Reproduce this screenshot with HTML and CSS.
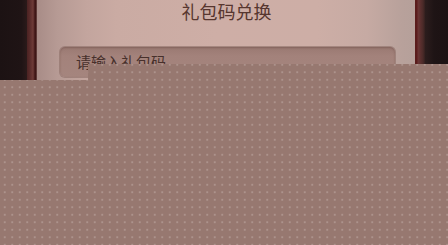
FILE: index.html
```html
<!DOCTYPE html>
<html lang="zh">
<head>
<meta charset="utf-8">
<link rel="stylesheet" href="styles.css">
</head>
<body>
<div class="scene">
  <div class="gutter gutter-left"></div>
  <div class="frame">
    <div class="dialog">
      <h2 class="title">礼包码兑换</h2>
      <div class="input">请输入礼包码</div>
    </div>
  </div>
  <div class="gutter gutter-right"></div>
  <div class="veil"></div>
</div>
</body>
</html>
```
FILE: styles.css
```css
html, body {
  margin: 0;
  padding: 0;
  background: #1d1314;
}
.scene {
  position: relative;
  width: 448px;
  height: 245px;
  overflow: hidden;
  display: flex;
  font-family: "Noto Sans CJK SC", "Noto Sans", sans-serif;
}
.gutter-left {
  width: 27px;
  background: linear-gradient(90deg, #1c1213 0%, #1f1415 80%, #2a1a1a 100%);
}
.gutter-right {
  width: 23px;
  background: linear-gradient(90deg, #2c1d1d 0%, #1e1415 40%, #1c1213 100%);
}
.frame {
  width: 398px;
  background: linear-gradient(90deg,
    #4a2222 0px, #5a2c2b 3px, #6e3b38 6px, #3e1616 8px, #3e1616 9px, #7a5a55 10px,
    #7a5a55 calc(100% - 10px), #5a1c1c calc(100% - 10px), #5a1c1c calc(100% - 8px), #6b3535 calc(100% - 7px), #4a2a28 calc(100% - 2px), #33201f 100%);
  padding: 0 10px;
  box-sizing: border-box;
  display: flex;
}
.dialog {
  flex: 1;
  background: linear-gradient(90deg,
    #a88c87 0px, #b69a94 20px, #c3a59e 50px, #caaba3 80px, #ceaea6 180px, #cdaea6 280px, #c6aaa3 330px, #b8a19b 365px, #b5a09a 378px);
  display: flex;
  flex-direction: column;
  padding: 0 20px 0 23px;
}
.title {
  margin: 0;
  height: 22px;
  font-size: 18px;
  line-height: 22px;
  font-weight: 400;
  color: #57362f;
  text-align: center;
  padding: 0 2px 0 0;
}
.input {
  margin-top: 25px;
  height: 30px;
  border-radius: 5px;
  background: linear-gradient(180deg, #9a7972 0%, #a3827b 30%, #a5857e 100%);
  box-shadow: inset 0 1px 2px rgba(90, 55, 50, 0.35), 0 0 0 1px rgba(140, 110, 104, 0.6);
  font-size: 15px;
  line-height: 18px;
  color: #47302b;
  padding: 6px 0 0 16px;
  box-sizing: border-box;
}
.veil {
  position: absolute;
  left: 0;
  top: 0;
  width: 448px;
  height: 245px;
  background-color: #977870;
  background-image: radial-gradient(circle at 50% 50%, #c8b2ac 0px, #b59d97 0.5px, rgba(151,120,112,0) 1.1px);
  background-size: 7.5px 7.5px;
  background-position: 1px 1px;
  clip-path: polygon(88px 64px, 448px 64px, 448px 245px, 0 245px, 0 80px, 88px 80px);
}
```
